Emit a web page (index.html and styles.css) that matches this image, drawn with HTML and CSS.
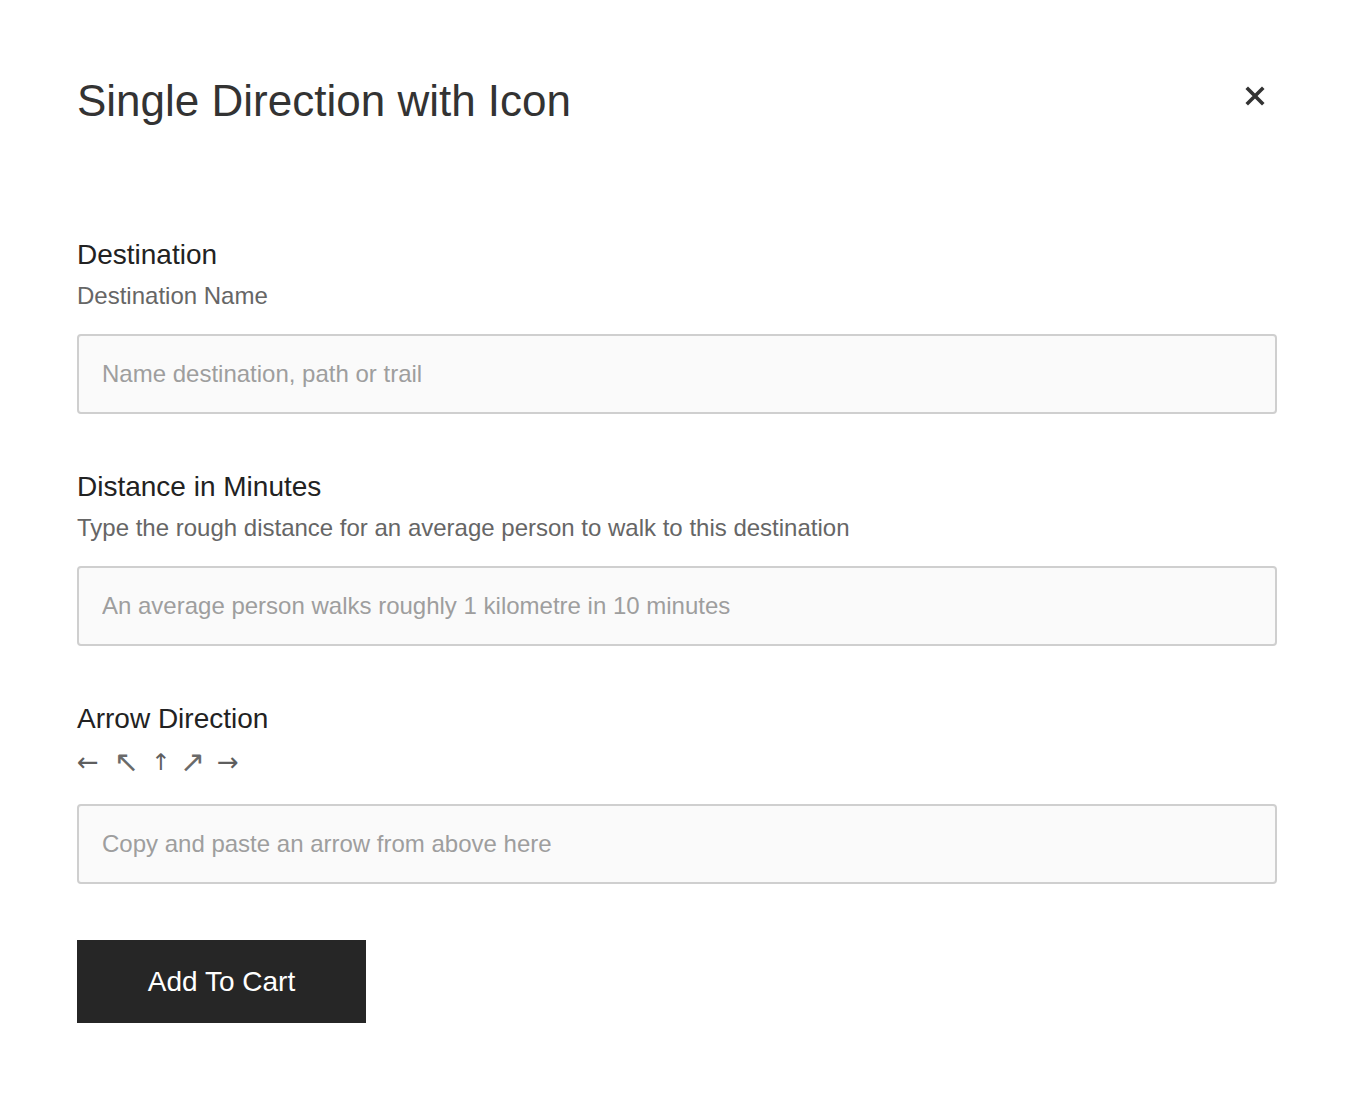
FILE: index.html
```html
<!DOCTYPE html>
<html lang="en">
<head>
<meta charset="utf-8">
<title>Single Direction with Icon</title>
<link rel="stylesheet" href="styles.css">
</head>
<body>
<div class="modal">
  <header class="modal-header">
    <h1 class="modal-title">Single Direction with Icon</h1>
    <button class="close-btn" type="button" aria-label="Close">
      <svg width="20" height="20" viewBox="0 0 20 20" aria-hidden="true">
        <path d="M3 3 L17 17 M17 3 L3 17" stroke="#333" stroke-width="3.6" stroke-linecap="square" fill="none"/>
      </svg>
    </button>
  </header>

  <form class="form">
    <div class="field">
      <label class="field-label">Destination</label>
      <p class="field-help">Destination Name</p>
      <input class="field-input" type="text" placeholder="Name destination, path or trail">
    </div>

    <div class="field">
      <label class="field-label">Distance in Minutes</label>
      <p class="field-help">Type the rough distance for an average person to walk to this destination</p>
      <input class="field-input" type="text" placeholder="An average person walks roughly 1 kilometre in 10 minutes">
    </div>

    <div class="field">
      <label class="field-label">Arrow Direction</label>
      <p class="arrows"><span class="arrow a-left">←</span><span class="arrow a-ul">↖</span><span class="arrow a-up">↑</span><span class="arrow a-ur">↗</span><span class="arrow a-right">→</span></p>
      <input class="field-input arrow-input" type="text" placeholder="Copy and paste an arrow from above here">
    </div>

    <button class="submit-btn" type="button">Add To Cart</button>
  </form>
</div>
</body>
</html>
```

FILE: styles.css
```css
* {
  box-sizing: border-box;
}

html, body {
  margin: 0;
  padding: 0;
  background: #ffffff;
}

body {
  font-family: "Liberation Sans", Arial, Helvetica, sans-serif;
  color: #222222;
}

.modal {
  width: 1200px;
  margin-left: 77px;
  padding-top: 75px;
}

.modal-header {
  display: flex;
  justify-content: space-between;
  align-items: flex-start;
}

.modal-title {
  margin: 0;
  font-size: 44px;
  line-height: 52px;
  font-weight: 400;
  color: #333333;
}

.close-btn {
  width: 44px;
  height: 44px;
  margin-top: -1px;
  padding: 0;
  border: none;
  background: transparent;
  display: flex;
  align-items: center;
  justify-content: center;
  cursor: pointer;
}

.form {
  margin-top: 111px;
}

.field {
  display: flex;
  flex-direction: column;
  margin-bottom: 56px;
}

.field:last-of-type {
  margin-bottom: 56px;
}

.field-label {
  font-size: 28px;
  line-height: 34px;
  color: #222222;
}

.field-help {
  margin: 7px 0 21px;
  font-size: 24px;
  line-height: 34px;
  color: #666666;
}

.field-input {
  width: 100%;
  height: 80px;
  padding: 0 23px;
  border: 2px solid #cfcfcf;
  border-radius: 4px;
  background: #fafafa;
  font-family: "Liberation Sans", Arial, Helvetica, sans-serif;
  font-size: 24px;
  color: #333333;
  outline: none;
}

.field-input::placeholder {
  color: #9e9e9e;
}

.arrows {
  margin: 9px 0 25px;
  display: flex;
  align-items: center;
  height: 34px;
  font-family: "DejaVu Sans", sans-serif;
  font-size: 22px;
  line-height: 34px;
  color: #5e5e5e;
}

.arrow {
  display: inline-block;
  text-align: center;
  line-height: 34px;
}

.a-left { width: 21px; margin-right: 16px; font-size: 26px; }
.a-ul { width: 21px; margin-right: 16px; font-size: 30px; color: #6a6a6a; }
.a-up { width: 12px; margin-right: 17px; font-size: 23px; }
.a-ur { width: 21px; margin-right: 16px; font-size: 30px; color: #6a6a6a; }
.a-right { width: 22px; font-size: 26px; }

.submit-btn {
  width: 289px;
  height: 83px;
  border: none;
  border-radius: 0;
  background: #262626;
  color: #ffffff;
  font-family: "Liberation Sans", Arial, Helvetica, sans-serif;
  font-size: 28px;
  cursor: pointer;
}
```
